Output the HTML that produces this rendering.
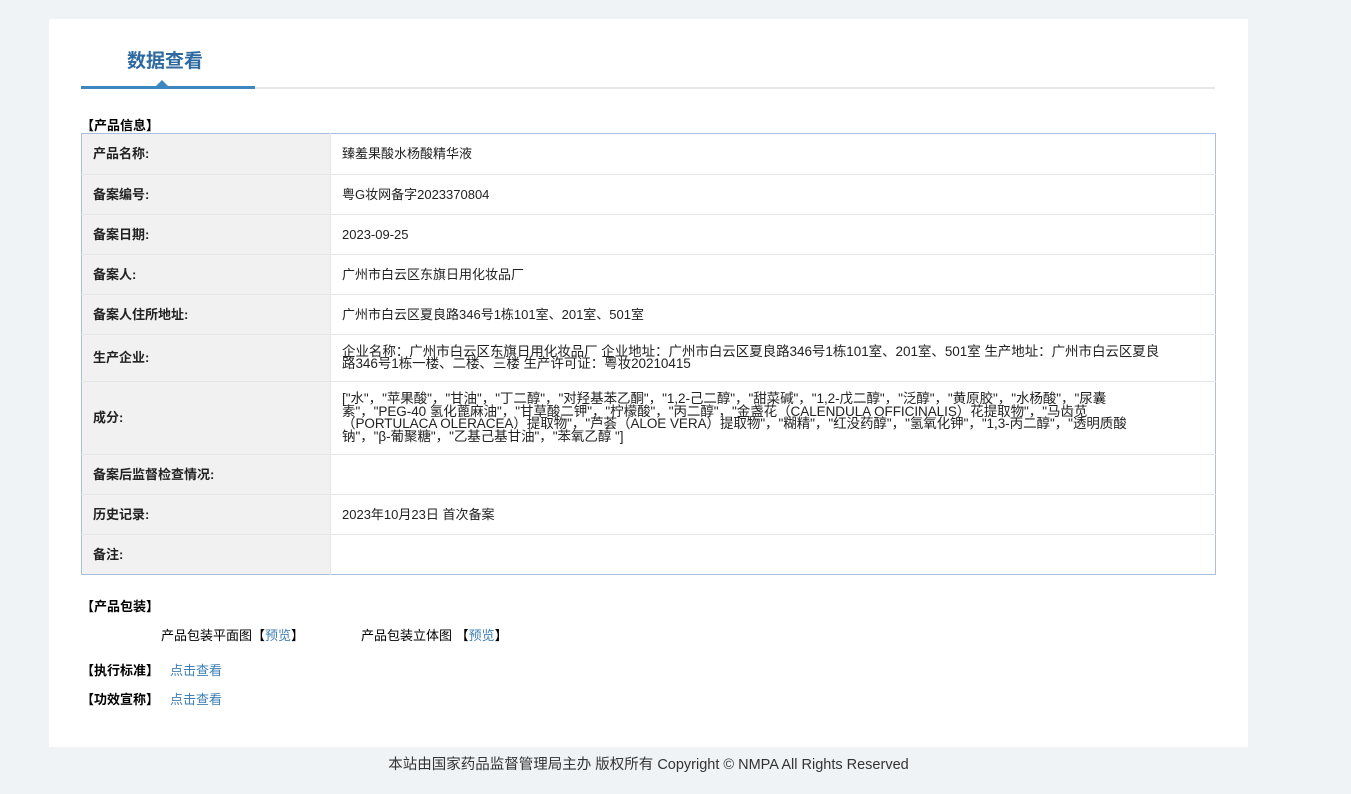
<!DOCTYPE html>
<html><head><meta charset="utf-8"><style>
*{margin:0;padding:0;box-sizing:border-box}
body{width:1351px;height:794px;background:#eff3f6;font-family:"Liberation Sans","Noto Sans CJK SC",sans-serif;font-size:13px;color:#333;position:relative;overflow:hidden}
.card{position:absolute;left:49px;top:19px;width:1199px;height:728px;background:#fff}
.title{position:absolute;left:127px;top:46px;font-size:19px;font-weight:bold;color:#2c6aa0}
.gl{position:absolute;left:81px;top:87px;width:1134px;height:2px;background:#e6e9ec}
.bl{position:absolute;left:81px;top:86px;width:174px;height:3px;background:#3b87c0}
.tri{position:absolute;left:156px;top:80px;width:0;height:0;border-left:6px solid transparent;border-right:6px solid transparent;border-bottom:6px solid #3b87c0}
.sec{position:absolute;font-weight:bold;font-size:13px;color:#000}
table{position:absolute;left:81px;top:133px;width:1135px;border-collapse:collapse;border:1px solid #a8c0dc}
td{border-bottom:1px solid #e6e6e6;vertical-align:middle;font-size:13px;line-height:16px}
td.l{width:249px;background:#f1f1f1;font-weight:bold;padding-left:11px;color:#222;border-right:1px solid #e6e6e6}
td.v{padding-left:11px;color:#222}
.m{line-height:12.5px;font-size:13.5px;letter-spacing:-0.05px}
a{color:#3d7fb5;text-decoration:none}
.foot{position:absolute;left:0;width:1297px;text-align:center;top:753px;font-size:14.5px;color:#333}
</style></head><body>
<div class="card"></div>
<div class="title">数据查看</div>
<div class="gl"></div><div class="bl"></div><div class="tri"></div>
<div class="sec" style="left:81px;top:115px">【产品信息】</div>
<table>
<tr style="height:41px"><td class="l">产品名称:</td><td class="v">臻羞果酸水杨酸精华液</td></tr>
<tr style="height:40px"><td class="l">备案编号:</td><td class="v">粤G妆网备字2023370804</td></tr>
<tr style="height:40px"><td class="l">备案日期:</td><td class="v">2023-09-25</td></tr>
<tr style="height:40px"><td class="l">备案人:</td><td class="v">广州市白云区东旗日用化妆品厂</td></tr>
<tr style="height:40px"><td class="l">备案人住所地址:</td><td class="v">广州市白云区夏良路346号1栋101室、201室、501室</td></tr>
<tr style="height:47px"><td class="l">生产企业:</td><td class="v"><div class="m">企业名称：广州市白云区东旗日用化妆品厂 企业地址：广州市白云区夏良路346号1栋101室、201室、501室 生产地址：广州市白云区夏良<br>路346号1栋一楼、二楼、三楼 生产许可证：粤妆20210415</div></td></tr>
<tr style="height:73px"><td class="l">成分:</td><td class="v"><div class="m">["水"，"苹果酸"，"甘油"，"丁二醇"，"对羟基苯乙酮"，"1,2-己二醇"，"甜菜碱"，"1,2-戊二醇"，"泛醇"，"黄原胶"，"水杨酸"，"尿囊<br>素"，"PEG-40 氢化蓖麻油"，"甘草酸二钾"，"柠檬酸"，"丙二醇"，"金盏花（CALENDULA OFFICINALIS）花提取物"，"马齿苋<br>（PORTULACA OLERACEA）提取物"，"芦荟（ALOE VERA）提取物"，"糊精"，"红没药醇"，"氢氧化钾"，"1,3-丙二醇"，"透明质酸<br>钠"，"β-葡聚糖"，"乙基己基甘油"，"苯氧乙醇 "]</div></td></tr>
<tr style="height:40px"><td class="l">备案后监督检查情况:</td><td class="v"></td></tr>
<tr style="height:40px"><td class="l">历史记录:</td><td class="v">2023年10月23日 首次备案</td></tr>
<tr style="height:40px"><td class="l" style="border-bottom:none">备注:</td><td class="v" style="border-bottom:none"></td></tr>
</table>
<div class="sec" style="left:81px;top:596px">【产品包装】</div>
<div style="position:absolute;left:161px;top:625px;color:#000">产品包装平面图【<a>预览</a>】</div>
<div style="position:absolute;left:361px;top:625px;color:#000">产品包装立体图 【<a>预览</a>】</div>
<div class="sec" style="left:81px;top:660px">【执行标准】</div><a style="position:absolute;left:170px;top:660px">点击查看</a>
<div class="sec" style="left:81px;top:689px">【功效宣称】</div><a style="position:absolute;left:170px;top:689px">点击查看</a>
<div class="foot">本站由国家药品监督管理局主办 版权所有 Copyright © NMPA All Rights Reserved</div>
</body></html>
